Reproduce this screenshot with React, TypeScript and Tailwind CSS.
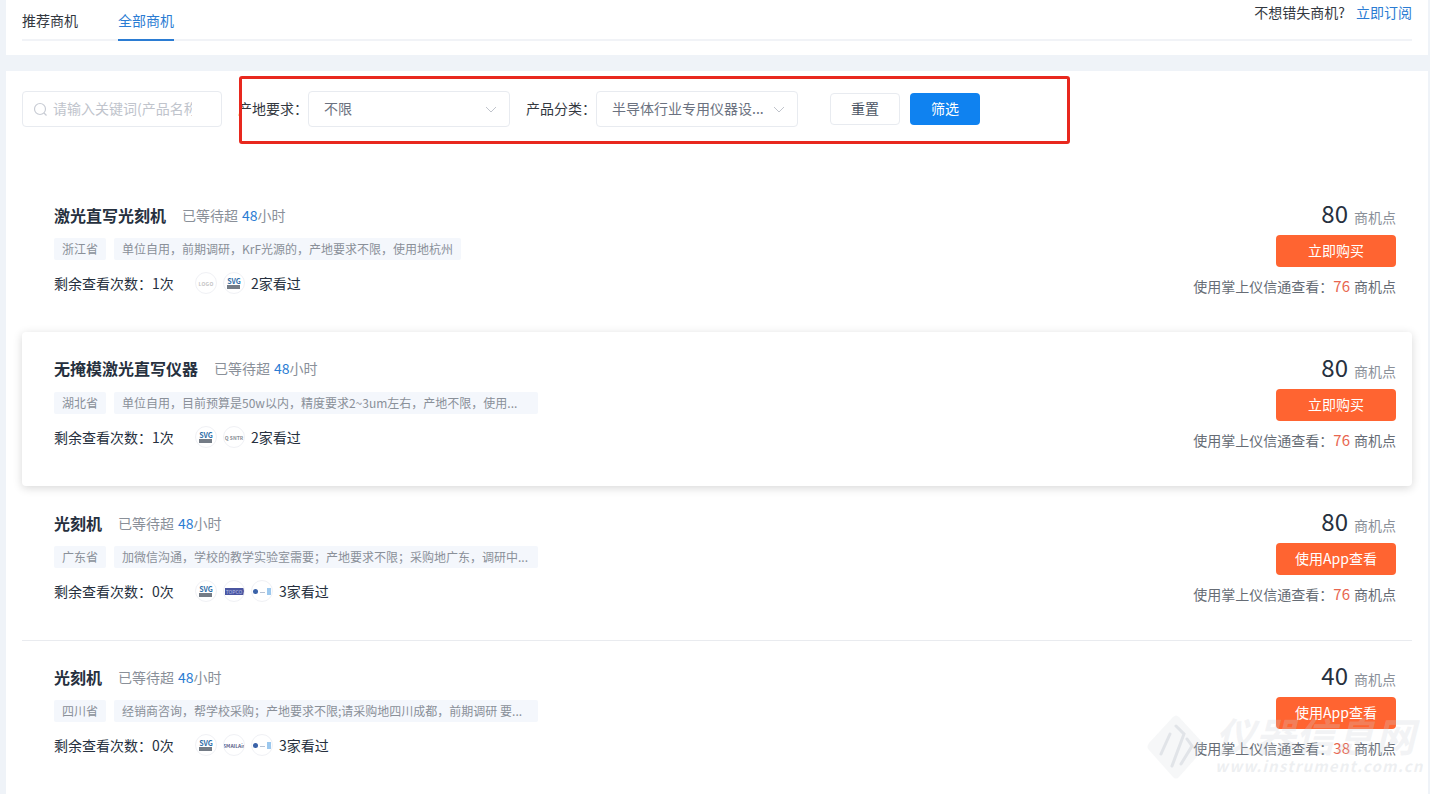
import React from "react";

const FONT = "font-['Noto_Sans_CJK_SC','Noto_Sans',sans-serif]";
const COLON = "\uFF1A";

function Chevron() {
  return (
    <svg width="12" height="7" viewBox="0 0 12 7" fill="none" stroke="#c0c4cc" strokeWidth="1">
      <path d="M1 1l5 5 5-5" />
    </svg>
  );
}

function Select({ value }: { value: string }) {
  return (
    <div className="w-[202px] h-[36px] border border-[#e8ebf0] rounded-[4px] bg-white flex items-center justify-between pl-[15px] pr-[12px] text-[14px] text-[#6b7280]">
      <span className="whitespace-nowrap pb-[2px]">{value}</span>
      <Chevron />
    </div>
  );
}

function Logo({ kind }: { kind: string }) {
  let inner: React.ReactNode = null;
  if (kind === "logo")
    inner = <span className="text-[5px] leading-none font-bold tracking-[0.3px] text-[#c4c4c4]">LOGO</span>;
  if (kind === "svg")
    inner = (
      <span className="flex flex-col items-center leading-none">
        <span className="text-[7px] leading-[6px] font-bold text-[#2f6ea8]">SVG</span>
        <span className="mt-[1px] w-[13px] h-[4px] bg-[#747c86]" />
      </span>
    );
  if (kind === "unit")
    inner = <span className="text-[5px] leading-none font-bold text-[#8a8f96]">Q SNTR</span>;
  if (kind === "topo")
    inner = <span className="w-[19px] h-[7px] bg-[#4a55a0] text-[5px] leading-[7px] text-center text-[#b8c0e8]">TOPCO</span>;
  if (kind === "smart")
    inner = <span className="text-[5px] leading-none font-bold text-[#5a5f8a]">SMAILAir</span>;
  if (kind === "q")
    inner = (
      <span className="flex items-center gap-[2px]">
        <span className="w-[5px] h-[5px] rounded-full bg-[#3a62a8]" />
        <span className="w-[5px] h-[1px] mt-[3px] bg-[#b6c2d4]" />
        <span className="w-[4px] h-[7px] bg-[#9cc8ee]" />
      </span>
    );
  return (
    <div className="w-[22px] h-[22px] rounded-full border border-[#f0f1f5] bg-white flex items-center justify-center overflow-hidden">
      {inner}
    </div>
  );
}

type Lead = {
  title: string;
  region: string;
  desc: string;
  clipped?: boolean;
  times: string;
  logos: string[];
  seen: string;
  points: string;
  cta: string;
  member: string;
  raised?: boolean;
  divider?: boolean;
};

const leads: Lead[] = [
  {
    title: "激光直写光刻机",
    region: "浙江省",
    desc: "单位自用\uFF0C前期调研\uFF0CKrF光源的\uFF0C产地要求不限\uFF0C使用地杭州",
    times: "1次",
    logos: ["logo", "svg"],
    seen: "2家看过",
    points: "80",
    cta: "立即购买",
    member: "76",
  },
  {
    title: "无掩模激光直写仪器",
    region: "湖北省",
    desc: "单位自用\uFF0C目前预算是50w以内\uFF0C精度要求2~3um左右\uFF0C产地不限\uFF0C使用...",
    clipped: true,
    times: "1次",
    logos: ["svg", "unit"],
    seen: "2家看过",
    points: "80",
    cta: "立即购买",
    member: "76",
    raised: true,
  },
  {
    title: "光刻机",
    region: "广东省",
    desc: "加微信沟通\uFF0C学校的教学实验室需要\uFF1B产地要求不限\uFF1B采购地广东\uFF0C调研中...",
    clipped: true,
    times: "0次",
    logos: ["svg", "topo", "q"],
    seen: "3家看过",
    points: "80",
    cta: "使用App查看",
    member: "76",
  },
  {
    title: "光刻机",
    region: "四川省",
    desc: "经销商咨询\uFF0C帮学校采购\uFF1B产地要求不限;请采购地四川成都\uFF0C前期调研 要...",
    clipped: true,
    times: "0次",
    logos: ["svg", "smart", "q"],
    seen: "3家看过",
    points: "40",
    cta: "使用App查看",
    member: "38",
    divider: true,
  },
];

function Row({ lead }: { lead: Lead }) {
  const box = lead.raised
    ? "rounded-[4px] shadow-[0_2px_10px_rgba(0,0,0,0.16)] relative z-10"
    : lead.divider
      ? "shadow-[inset_0_1px_0_#e9ebef]"
      : "";
  return (
    <div className={`h-[154px] pl-[32px] pr-[16px] flex justify-between bg-white ${box}`}>
      <div className={lead.raised ? "pt-[24px]" : "pt-[25px]"}>
        <div className="h-[24px] flex items-center whitespace-nowrap">
          <span className="text-[16px] font-bold text-[#26303e]">{lead.title}</span>
          <span className="ml-[16px] text-[14px] text-[#8a9099]">已等待超</span>
          <span className="ml-[4px] text-[14px] text-[#2b7cd3]">48</span>
          <span className="text-[14px] text-[#8a9099]">小时</span>
        </div>
        <div className={`${lead.raised ? "mt-[12px]" : "mt-[11px]"} flex gap-[8px] text-[12px] text-[#8a9099] whitespace-nowrap`}>
          <span className="h-[22px] leading-[22px] px-[8px] bg-[#f4f7fc] rounded-[2px]">{lead.region}</span>
          <span className={`h-[22px] leading-[22px] px-[8px] bg-[#f4f7fc] rounded-[2px] ${lead.clipped ? "w-[424px]" : ""}`}>
            {lead.desc}
          </span>
        </div>
        <div className="mt-[12px] flex items-center text-[14px] text-[#26303e] whitespace-nowrap h-[22px]">
          <span className="w-[141px]">
            {"剩余查看次数" + COLON + lead.times}
          </span>
          <div className="flex gap-[6px]">
            {lead.logos.map((k, i) => (
              <Logo key={i} kind={k} />
            ))}
          </div>
          <span className="ml-[6px]">{lead.seen}</span>
        </div>
      </div>
      <div className="pt-[20px] flex flex-col items-end whitespace-nowrap">
        <div className="h-[30px] flex items-baseline">
          <span className="text-[24px] leading-[30px] text-[#26303e]">{lead.points}</span>
          <span className="ml-[6px] text-[14px] text-[#8a9099]">商机点</span>
        </div>
        <button className="mt-[7px] w-[120px] h-[32px] pb-[2px] rounded-[4px] bg-[#ff6431] text-white text-[14px]">
          {lead.cta}
        </button>
        <div className="mt-[8px] h-[22px] flex items-baseline text-[14px] text-[#666c75]">
          <span>{"使用掌上仪信通查看" + COLON}</span>
          <span className="text-[#e8664f] text-[15px]">{lead.member}</span>
          <span className="ml-[4px]">商机点</span>
        </div>
      </div>
    </div>
  );
}

export default function App() {
  return (
    <div className={`relative h-[794px] overflow-hidden bg-[#eff3f8] pl-[6px] pr-[2px] ${FONT}`}>
      <div className="h-[55px] bg-white px-[16px] flex flex-col">
        <div className="h-[41px] border-b-2 border-[#f1f3f7] flex justify-between text-[14px]">
          <div className="flex gap-[40px]">
            <div className="h-[41px] pt-[10px] text-[#33383f]">推荐商机</div>
            <div className="h-[41px] pt-[10px] text-[#2b7cd3] border-b-2 border-[#2b7cd3]">全部商机</div>
          </div>
          <div className="pt-[2px] whitespace-nowrap">
            <span className="text-[#33383f]">不想错失商机?</span>
            <span className="ml-[11px] text-[#2b7cd3]">立即订阅</span>
          </div>
        </div>
      </div>

      <div className="mt-[16px] h-[723px] bg-white">
        <div className="pt-[20px] pl-[16px] flex items-center text-[14px]">
          <div className="w-[200px] h-[36px] border border-[#e8ebf0] rounded-[4px] flex items-center pl-[10px] overflow-hidden">
            <svg width="15" height="15" viewBox="0 0 15 15" fill="none" stroke="#c8ccd4" strokeWidth="1.2" className="shrink-0">
              <circle cx="7" cy="7" r="5.5" />
              <path d="M11 11l2.5 2.5" />
            </svg>
            <span className="ml-[5px] pb-[2px] w-[139px] overflow-hidden whitespace-nowrap text-[#c0c4cc]">请输入关键词(产品名称</span>
          </div>
          <span className="ml-[16px] w-[70px] pb-[2px] whitespace-nowrap text-[#33383f]">{"产地要求" + COLON}</span>
          <Select value="不限" />
          <span className="ml-[16px] w-[70px] pb-[2px] whitespace-nowrap text-[#33383f]">{"产品分类" + COLON}</span>
          <Select value="半导体行业专用仪器设..." />
          <button className="ml-[32px] w-[70px] h-[32px] pb-[2px] border border-[#e8ebf0] rounded-[4px] bg-white text-[#4b5563]">重置</button>
          <button className="ml-[10px] w-[70px] h-[32px] pb-[2px] rounded-[4px] bg-[#0f82f0] text-white">筛选</button>
        </div>

        <div className="mt-[51px] ml-[16px] w-[1390px]">
          {leads.map((l, i) => (
            <Row key={i} lead={l} />
          ))}
        </div>
      </div>

      {/* red annotation box over the filters */}
      <div className="absolute left-[239px] top-[76px] w-[831px] h-[68px] border-[3px] border-[#e8281e] rounded-[3px] z-20" />

      {/* watermark over the page corner */}
      <div className="absolute left-[1143px] top-[712px] w-[285px] h-[72px] z-30 pointer-events-none">
        <svg width="66" height="70" viewBox="0 0 66 70" fill="none" className="absolute left-0 top-0">
          <path d="M30 5Q33 2 36 5L60 31Q63 35 60 38L36 65Q33 68 30 65L6 38Q3 35 6 31Z" fill="rgba(214,218,224,0.22)" />
          <path d="M27 22l-9 20M33 14l8 8-12 32M44 27l5 7-11 18" stroke="rgba(200,205,212,0.45)" strokeWidth="3" strokeLinecap="round" />
        </svg>
        <div className="absolute left-[72px] top-[1px] text-[40px] leading-[44px] font-bold italic whitespace-nowrap text-[rgba(205,210,216,0.26)]">
          仪器信息网
        </div>
        <div className="absolute left-[72px] top-[45px] text-[15px] leading-[18px] font-bold italic tracking-[1.2px] whitespace-nowrap text-[rgba(205,210,216,0.35)]">
          www.instrument.com.cn
        </div>
      </div>
    </div>
  );
}
